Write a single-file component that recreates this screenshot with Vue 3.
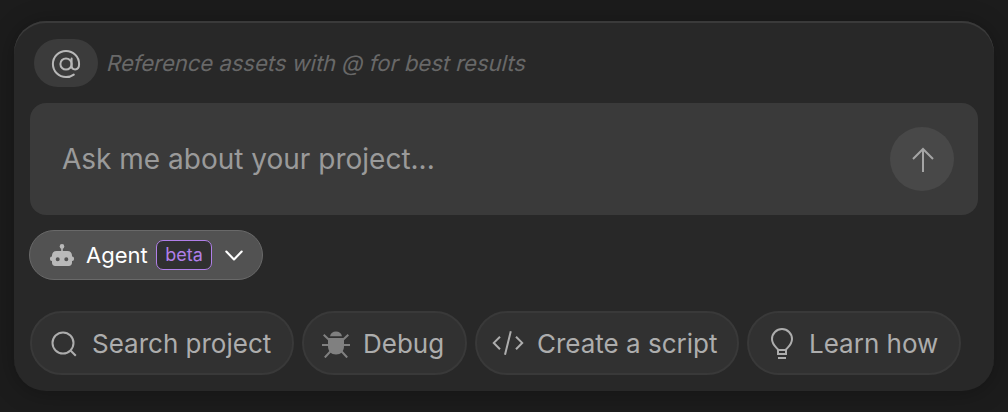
<script setup>
const actions = [
  { id: 'search', label: 'Search project' },
  { id: 'debug', label: 'Debug' },
  { id: 'script', label: 'Create a script' },
  { id: 'learn', label: 'Learn how' },
]
</script>

<template>
  <main class="stage">
    <section class="panel">
      <div class="context">
        <button class="mention" aria-label="Reference an asset">
          <svg width="30" height="30" viewBox="0 0 30 30" fill="none" stroke="#b8b8b8" stroke-width="2" stroke-linecap="round">
            <circle cx="15" cy="15" r="5.6" />
            <path d="M20.6 9.6v6.6c0 2.7 1.3 4.2 3.5 4.2 2.8 0 4-2.4 4-5.4A13.1 13.1 0 1 0 15 28.1c2.9 0 5.6-.9 7.8-2.5" />
          </svg>
        </button>
        <span class="hint">Reference assets with @ for best results</span>
      </div>

      <div class="prompt">
        <span class="placeholder">Ask me about your project...</span>
        <button class="send" aria-label="Send">
          <svg width="24" height="26" viewBox="0 0 24 26" fill="none" stroke="#a5a5a5" stroke-width="2">
            <path d="M12 25V2M2 12 12 2l10 10" />
          </svg>
        </button>
      </div>

      <button class="agent">
        <svg width="24" height="22" viewBox="0 0 24 22" fill="#b9b9b9">
          <circle cx="12" cy="2.4" r="2.3" />
          <path d="M11.2 3h1.6v5h-1.6z" />
          <path fill-rule="evenodd" d="M6.5 7h11c2.8 0 4.5 1.8 4.5 4.5v1h.3a1.7 1.7 0 0 1 1.7 1.7v1.1a1.7 1.7 0 0 1-1.7 1.7H22v1.8c0 2-1.2 3.2-3.2 3.2H5.2C3.2 22 2 20.8 2 18.8V17h-.3A1.7 1.7 0 0 1 0 15.3v-1.1a1.7 1.7 0 0 1 1.7-1.7H2v-1C2 8.8 3.7 7 6.5 7Zm1.2 6.3a2 2 0 1 0 0 4 2 2 0 0 0 0-4Zm8.6 0a2 2 0 1 0 0 4 2 2 0 0 0 0-4Z" />
        </svg>
        <span class="agent-name">Agent</span>
        <span class="beta">beta</span>
        <svg class="chevron" width="18" height="12" viewBox="0 0 18 12" fill="none" stroke="#fff" stroke-width="2.1" stroke-linecap="round" stroke-linejoin="round">
          <path d="m1.3 1.5 7.7 8 7.7-8" />
        </svg>
      </button>

      <div class="actions">
        <button v-for="a in actions" :key="a.id" class="chip" :class="a.id">
          <svg v-if="a.id === 'search'" width="26" height="26" viewBox="0 0 26 26" fill="none" stroke="#adadad" stroke-width="2">
            <circle cx="12" cy="12" r="10.5" />
            <path d="m19 19 5.8 5.8" />
          </svg>
          <svg v-else-if="a.id === 'debug'" width="28" height="28" viewBox="0 0 28 28" fill="#808080">
            <path d="M8 6.2a6.2 6.2 0 0 1 12 0Z" />
            <path d="M6 8h16v8c0 5.3-3.2 8.5-8 8.5S6 21.3 6 16Z" />
            <path d="M1.7 4.7 7 9.8M26.3 4.7 21 9.8M0 15h7M28 15h-7M2.8 27.5l6-6.5M25.2 27.5l-6-6.5" fill="none" stroke="#808080" stroke-width="2" />
          </svg>
          <svg v-else-if="a.id === 'script'" width="32" height="24" viewBox="0 0 32 24" fill="none" stroke="#adadad" stroke-width="2">
            <path d="m8 5.7-6.2 6.2L8 18.2M24 5.7l6.2 6.2-6.2 6.3M18.8.3 13 23.7" />
          </svg>
          <svg v-else width="22" height="32" viewBox="0 0 22 32" fill="none" stroke="#adadad" stroke-width="2">
            <path d="M7 21.5C4.7 18.8 1 16.4 1 11a10 10 0 0 1 20 0c0 5.4-3.7 7.8-6 10.5V26H7ZM7 22h8M7 30h8" />
          </svg>
          <span class="chip-label">{{ a.label }}</span>
        </button>
      </div>
    </section>
  </main>
</template>

<style>
body {
  background: #1c1c1c;
}
</style>

<style scoped>
.stage {
  box-sizing: border-box;
  width: 1008px;
  height: 412px;
  padding: 21px 14px;
  overflow: hidden;
  background: #1c1c1c;
  font-family: Inter, "Liberation Sans", sans-serif;
}
.panel {
  box-sizing: border-box;
  height: 370px;
  padding: 18px 16px 16px;
  border-radius: 32px;
  background: #282828;
  box-shadow: inset 0 2px 0 #3a3a3a, 0 2px 24px rgba(0, 0, 0, 0.28);
}
button {
  box-sizing: border-box;
  display: flex;
  align-items: center;
  margin: 0;
  padding: 0;
  border: 0;
  font: inherit;
}
svg {
  display: block;
  flex: none;
}
span {
  white-space: nowrap;
}
.context {
  display: flex;
  align-items: center;
  height: 48px;
  padding-left: 4px;
}
.mention {
  justify-content: center;
  width: 64px;
  height: 48px;
  padding-top: 2px;
  border-radius: 24px;
  background: #3b3b3b;
}
/* Slanted upright letterforms, pivoting on the baseline */
.hint {
  margin-left: 8px;
  color: #686868;
  font-size: 22px;
  transform: skewX(-14deg);
  transform-origin: 0 78%;
}
.prompt {
  box-sizing: border-box;
  display: flex;
  align-items: center;
  justify-content: space-between;
  height: 112px;
  margin-top: 16px;
  padding: 0 24px 0 32px;
  border-radius: 16px;
  background: #3a3a3a;
}
.placeholder {
  color: #9a9a9a;
  font-size: 28px;
}
.send {
  justify-content: center;
  width: 64px;
  height: 64px;
  padding: 2px 0 0 2px;
  border-radius: 50%;
  background: #484848;
}
.agent {
  width: 234px;
  height: 50px;
  margin: 15px 0 0 -1px;
  padding-left: 20px;
  border: 1px solid #696969;
  border-radius: 25px;
  background: #525252;
}
.agent-name {
  width: 62px;
  margin-left: 12px;
  color: #fff;
  font-size: 22px;
  text-align: left;
}
.beta {
  box-sizing: border-box;
  width: 56px;
  height: 30px;
  margin-left: 8px;
  border: 1px solid #b07fe8;
  border-radius: 7px;
  background: #303030;
  color: #b07fe8;
  font-size: 18px;
  line-height: 28px;
  text-align: center;
}
.chevron {
  margin: 2px 0 0 13px;
}
.actions {
  display: flex;
  gap: 8px;
  margin-top: 31px;
}
.chip {
  height: 64px;
  border: 2px solid #393939;
  border-radius: 32px;
  background: #313131;
}
.chip-label {
  color: #adadad;
  font-size: 26px;
}
.search {
  width: 264px;
  padding-left: 19px;
}
.search .chip-label {
  margin-left: 15px;
}
.search svg,
.debug svg {
  margin-top: 2px;
}
.debug {
  width: 165px;
  padding-left: 18px;
}
.debug .chip-label {
  margin-left: 13px;
}
.script {
  width: 264px;
  padding-left: 15px;
}
.script .chip-label {
  margin-left: 13px;
}
.learn {
  width: 214px;
  padding-left: 22px;
}
.learn svg {
  margin-top: 2px;
}
.learn .chip-label {
  margin-left: 16px;
}
</style>
